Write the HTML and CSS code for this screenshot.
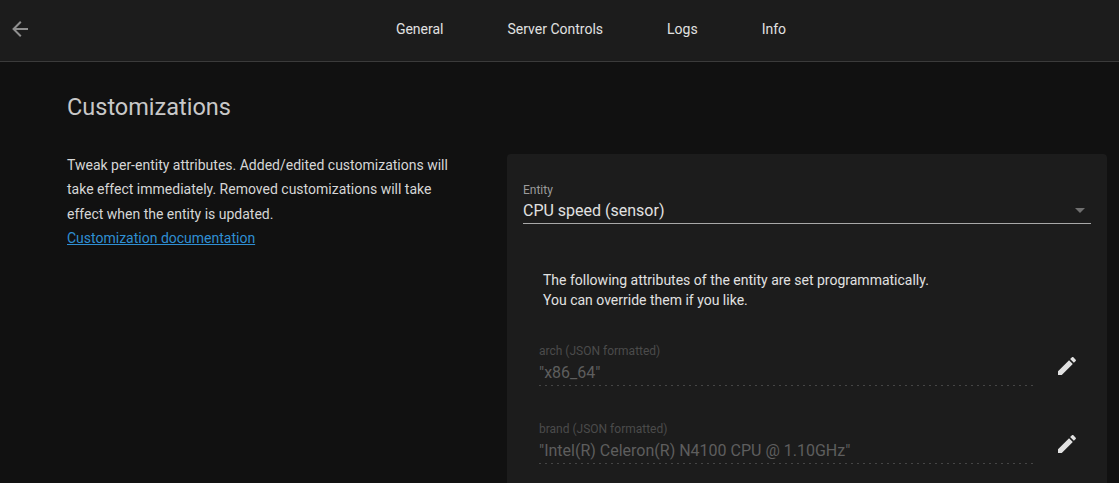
FILE: index.html
```html
<!DOCTYPE html>
<html lang="en">
<head>
<meta charset="utf-8">
<title>Customizations</title>
<link rel="stylesheet" href="styles.css">
</head>
<body>
<header class="topbar">
  <button class="back" aria-label="Back">
    <svg viewBox="0 0 24 24" width="24" height="24"><path d="M20,11V13H8L13.5,18.5L12.08,19.92L4.16,12L12.08,4.08L13.5,5.5L8,11H20Z"/></svg>
  </button>
  <nav class="tabs">
    <a class="tab">General</a>
    <a class="tab">Server Controls</a>
    <a class="tab">Logs</a>
    <a class="tab">Info</a>
  </nav>
</header>
<main class="page">
  <h1 class="title">Customizations</h1>
  <div class="columns">
    <section class="intro">
      <p>Tweak per-entity attributes. Added/edited customizations will take effect immediately. Removed customizations will take effect when the entity is updated.<br><a class="doc-link" href="#">Customization documentation</a></p>
    </section>
    <section class="card">
      <div class="select">
        <div class="select-label">Entity</div>
        <div class="select-row">
          <span class="select-value">CPU speed (sensor)</span>
          <span class="caret"></span>
        </div>
      </div>
      <p class="note">The following attributes of the entity are set programmatically.<br>You can override them if you like.</p>
      <div class="attr">
        <div class="field">
          <div class="field-label">arch (JSON formatted)</div>
          <div class="field-value">"x86_64"</div>
        </div>
        <svg class="edit" viewBox="0 0 24 24" width="24" height="24"><path d="M20.71,7.04C21.1,6.65 21.1,6 20.71,5.63L18.37,3.29C18,2.9 17.35,2.9 16.96,3.29L15.12,5.12L18.87,8.87M3,17.25V21H6.75L17.81,9.93L14.06,6.18L3,17.25Z"/></svg>
      </div>
      <div class="attr">
        <div class="field">
          <div class="field-label">brand (JSON formatted)</div>
          <div class="field-value">"Intel(R) Celeron(R) N4100 CPU @ 1.10GHz"</div>
        </div>
        <svg class="edit" viewBox="0 0 24 24" width="24" height="24"><path d="M20.71,7.04C21.1,6.65 21.1,6 20.71,5.63L18.37,3.29C18,2.9 17.35,2.9 16.96,3.29L15.12,5.12L18.87,8.87M3,17.25V21H6.75L17.81,9.93L14.06,6.18L3,17.25Z"/></svg>
      </div>
    </section>
  </div>
</main>
</body>
</html>
```
FILE: styles.css
```css
* { box-sizing: border-box; }
html, body { height: 100%; }
body {
  margin: 0;
  height: 483px;
  overflow: hidden;
  background: #111111;
  color: #e1e1e1;
  font-family: Roboto, "Liberation Sans", sans-serif;
}
.topbar {
  position: relative;
  display: flex;
  justify-content: center;
  height: 62px;
  padding-left: 63px;
  background: #1c1c1c;
  border-bottom: 1px solid #3b3b3b;
}
.back {
  position: absolute;
  left: 8px;
  top: 17px;
  width: 24px;
  height: 24px;
  padding: 0;
  border: 0;
  background: none;
}
.back svg { display: block; fill: #8f8f8f; }
.tabs { display: flex; align-items: center; height: 58px; }
.tab {
  padding: 0 32px;
  font-size: 14px;
  font-weight: 400;
  color: #e1e1e1;
}
.page { padding: 0 12px 0 67px; }
.title {
  margin: 0;
  padding-top: 29px;
  font-size: 23.5px;
  font-weight: 400;
  line-height: 32px;
  color: #c8c8c8;
}
.columns { display: flex; margin-top: 30px; }
.intro { width: 440px; flex: none; }
.intro p {
  margin: 0;
  width: 385px;
  font-size: 14px;
  line-height: 24.4px;
  color: #d6d6d6;
}
.doc-link { color: #2f8fd3; }
.card {
  width: 600px;
  height: 329px;
  margin-top: 1px;
  padding: 16px;
  background: #1c1c1c;
  border-radius: 4px 4px 0 0;
}
.select-label {
  padding-top: 13px;
  font-size: 12px;
  line-height: 15px;
  color: #9b9b9b;
}
.select-row {
  display: flex;
  align-items: center;
  justify-content: space-between;
  height: 26px;
  border-bottom: 1px solid #a8a8a8;
}
.select-value { font-size: 16px; color: #e1e1e1; }
.caret {
  width: 0;
  height: 0;
  margin-right: 6px;
  border-left: 5px solid transparent;
  border-right: 5px solid transparent;
  border-top: 5px solid #6f6f6f;
}
.note {
  margin: 46px 0 0;
  padding-left: 20px;
  font-size: 14px;
  line-height: 20px;
  color: #e1e1e1;
}
.attr {
  display: flex;
  align-items: flex-start;
  margin: 36px 0 0 16px;
}
.note + .attr { margin-top: 34px; }
.field {
  width: 496px;
  height: 42px;
  background: repeating-linear-gradient(to right, #454545 0 2px, transparent 2px 6px) bottom left / 100% 1px no-repeat;
}
.field-label { font-size: 12px; line-height: 15px; color: #4b4b4b; }
.field-value { margin-top: 2px; font-size: 16px; line-height: 24px; color: #5e5e5e; }
.edit { fill: #e1e1e1; margin: 10px 0 0 20px; flex: none; }
```
